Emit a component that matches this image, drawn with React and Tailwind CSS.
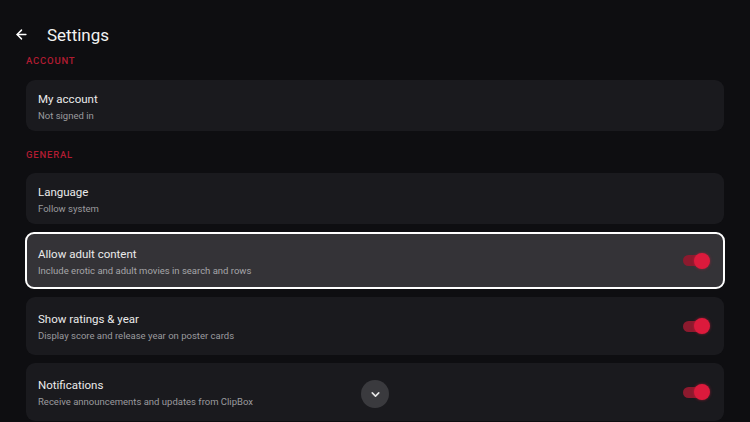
import { ArrowLeft, ChevronDown } from 'lucide-react'

const font = { fontFamily: 'Roboto, "Noto Sans", sans-serif' }

function Toggle() {
  return (
    <div className="relative w-[27px] h-[16px] flex items-center">
      <div className="w-[24px] h-[11px] rounded-full bg-[#8c1a2e]" />
      <div className="absolute right-0 top-0 w-[16px] h-[16px] rounded-full bg-[#dc1a3c] shadow-[0_0_3px_rgba(220,26,60,0.6)]" />
    </div>
  )
}

function Row({ title, subtitle, toggle, focused, height, className = '' }) {
  return (
    <div
      className={`flex items-center justify-between rounded-[9px] ${
        focused
          ? 'mx-[25px] border-2 border-white bg-[#343337] pl-[11px] pr-[13px]'
          : 'mx-[26px] bg-[#1a1a1e] pl-[12px] pr-[14px]'
      } ${height} ${className}`}
    >
      <div className="flex flex-col gap-[3px] pt-[2px]">
        <div className="text-[11.5px] leading-[15px] text-[#ebebeb]">{title}</div>
        <div className={`text-[9.5px] leading-[12px] ${focused ? 'text-[#a5a5a8]' : 'text-[#9a9a9e]'}`}>{subtitle}</div>
      </div>
      {toggle && <Toggle />}
    </div>
  )
}

function SectionLabel({ children, className = '' }) {
  return (
    <div className={`px-[26px] text-[9.5px] leading-[12px] font-medium tracking-[0.8px] text-[#b11c31] ${className}`}>
      {children}
    </div>
  )
}

export default function App() {
  return (
    <div className="relative w-[750px] h-[422px] overflow-hidden bg-[#0e0e11] flex flex-col" style={font}>
      {/* Header */}
      <div className="h-[57px] shrink-0 flex items-start pt-[25px] pl-[14px] gap-[18px] bg-[#0e0e11] z-10">
        <ArrowLeft className="w-[15px] h-[15px] mt-[2px] text-white" strokeWidth={2.3} />
        <div className="text-[17px] leading-[20px] text-[#f2f2f2]">Settings</div>
      </div>

      {/* List */}
      <div className="flex-1 overflow-hidden">
        <div className="-mt-[2px]">
          <SectionLabel>ACCOUNT</SectionLabel>
          <Row title="My account" subtitle="Not signed in" height="h-[51px]" className="mt-[13px]" />

          <SectionLabel className="mt-[18px]">GENERAL</SectionLabel>
          <Row title="Language" subtitle="Follow system" height="h-[51px]" className="mt-[12px]" />
          <Row
            title="Allow adult content"
            subtitle="Include erotic and adult movies in search and rows"
            toggle
            focused
            height="h-[57px]"
            className="mt-[8px]"
          />
          <Row
            title="Show ratings & year"
            subtitle="Display score and release year on poster cards"
            toggle
            height="h-[58px]"
            className="mt-[8px]"
          />
          <Row
            title="Notifications"
            subtitle="Receive announcements and updates from ClipBox"
            toggle
            height="h-[58px]"
            className="mt-[8px]"
          />
        </div>
      </div>

      {/* Scroll hint */}
      <div className="absolute left-[361px] top-[380px] w-[28px] h-[28px] rounded-full bg-[#3a3a3e] flex items-center justify-center">
        <ChevronDown className="w-[13px] h-[13px] text-[#e5e5e5]" strokeWidth={3} />
      </div>
    </div>
  )
}
